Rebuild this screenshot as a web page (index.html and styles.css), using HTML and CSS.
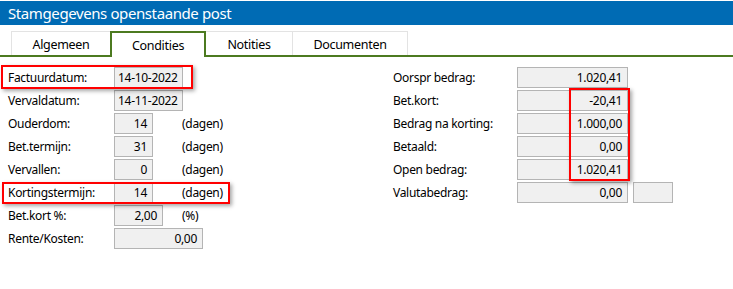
FILE: index.html
```html
<!DOCTYPE html>
<html lang="nl">
<head>
<meta charset="utf-8">
<title>Stamgegevens openstaande post</title>
<link rel="stylesheet" href="styles.css">
</head>
<body>
<div class="window">
  <div class="titlebar">Stamgegevens openstaande post</div>
  <div class="tabstrip">
    <div class="tab tab-algemeen">Algemeen</div>
    <div class="tab tab-active">Condities</div>
    <div class="tab tab-notities">Notities</div>
    <div class="tab tab-documenten">Documenten</div>
  </div>
  <div class="content">
    <div class="col col-left">
      <div class="row"><span class="label">Factuurdatum:</span><span class="field w-date left-text">14-10-2022</span></div>
      <div class="row"><span class="label">Vervaldatum:</span><span class="field w-date left-text">14-11-2022</span></div>
      <div class="row"><span class="label">Ouderdom:</span><span class="field w-small">14</span><span class="unit">(dagen)</span></div>
      <div class="row"><span class="label">Bet.termijn:</span><span class="field w-small">31</span><span class="unit">(dagen)</span></div>
      <div class="row"><span class="label">Vervallen:</span><span class="field w-small">0</span><span class="unit">(dagen)</span></div>
      <div class="row"><span class="label">Kortingstermijn:</span><span class="field w-small">14</span><span class="unit">(dagen)</span></div>
      <div class="row"><span class="label">Bet.kort %:</span><span class="field w-mid">2,00</span><span class="unit">(%)</span></div>
      <div class="row"><span class="label">Rente/Kosten:</span><span class="field w-wide">0,00</span></div>
    </div>
    <div class="col col-right">
      <div class="row"><span class="label">Oorspr bedrag:</span><span class="field w-amount">1.020,41</span></div>
      <div class="row"><span class="label">Bet.kort:</span><span class="field w-amount">-20,41</span></div>
      <div class="row"><span class="label">Bedrag na korting:</span><span class="field w-amount">1.000,00</span></div>
      <div class="row"><span class="label">Betaald:</span><span class="field w-amount">0,00</span></div>
      <div class="row"><span class="label">Open bedrag:</span><span class="field w-amount">1.020,41</span></div>
      <div class="row"><span class="label">Valutabedrag:</span><span class="field w-amount">0,00</span><span class="field w-cur"></span></div>
    </div>
  </div>
  <div class="mark mark-1"></div>
  <div class="mark mark-2"></div>
  <div class="mark mark-3"></div>
</div>
</body>
</html>
```

FILE: styles.css
```css
* { box-sizing: border-box; }
html, body { margin: 0; padding: 0; background: #ffffff; }
body {
  font-family: "Noto Sans", "Open Sans", "Liberation Sans", sans-serif;
  font-size: 12px;
  letter-spacing: -0.3px;
  color: #000000;
}
.window {
  position: relative;
  width: 733px;
  height: 289px;
  padding-top: 1px;
  background: #ffffff;
}
.titlebar {
  height: 24px;
  background: #006bb4;
  color: #ffffff;
  font-size: 15px;
  letter-spacing: -0.4px;
  line-height: 24px;
  padding-left: 8px;
}
.tabstrip {
  display: flex;
  align-items: flex-end;
  height: 32px;
  padding-left: 11px;
  border-bottom: 2px solid #4c7a20;
}
.tab {
  height: 24px;
  background: #ffffff;
  border: 1px solid #e3e3e3;
  border-bottom: none;
  display: flex;
  align-items: center;
  justify-content: center;
  font-size: 12.5px;
  letter-spacing: -0.3px;
  padding-top: 1px;
}
.tab-algemeen { width: 99px; border-right: none; }
.tab-active {
  width: 96px;
  height: 26px;
  margin-bottom: -2px;
  border: 2px solid #4c7a20;
  border-bottom: none;
  padding-top: 0;
}
.tab-notities { width: 87px; border-left: none; }
.tab-documenten { width: 115px; border-left: none; }

.content {
  display: grid;
  grid-template-columns: 385px 1fr;
  padding: 10px 0 0 8px;
}
.col {
  display: flex;
  flex-direction: column;
  gap: 2px;
}
.col-left .row {
  display: grid;
  grid-template-columns: 106px 68px auto;
  align-items: center;
  height: 21px;
}
.col-right .row {
  display: grid;
  grid-template-columns: 119px 111px 40px;
  column-gap: 5px;
  align-items: center;
  height: 21px;
}
.label { white-space: nowrap; }
.field {
  height: 21px;
  background: #f0f0f0;
  border: 1px solid #b4b4b4;
  text-align: right;
  padding: 0 5px 0 4px;
  line-height: 19px;
  white-space: nowrap;
}
.left-text { text-align: left; padding-left: 3px; }
.w-date { width: 69px; grid-column: span 2; }
.w-small { width: 39px; }
.w-mid { width: 49px; }
.w-wide { width: 89px; grid-column: span 2; }
.w-amount { width: 111px; }
.w-cur { width: 40px; }
.unit { white-space: nowrap; }

.mark {
  position: absolute;
  border: 2px solid #ff0000;
  box-shadow: 2px 2px 4px rgba(0, 0, 0, 0.35);
  pointer-events: none;
}
.mark-1 { left: 1px; top: 65px; width: 192px; height: 24px; }
.mark-2 { left: 2px; top: 182px; width: 228px; height: 22px; }
.mark-3 { left: 569px; top: 88px; width: 61px; height: 93px; }
```
